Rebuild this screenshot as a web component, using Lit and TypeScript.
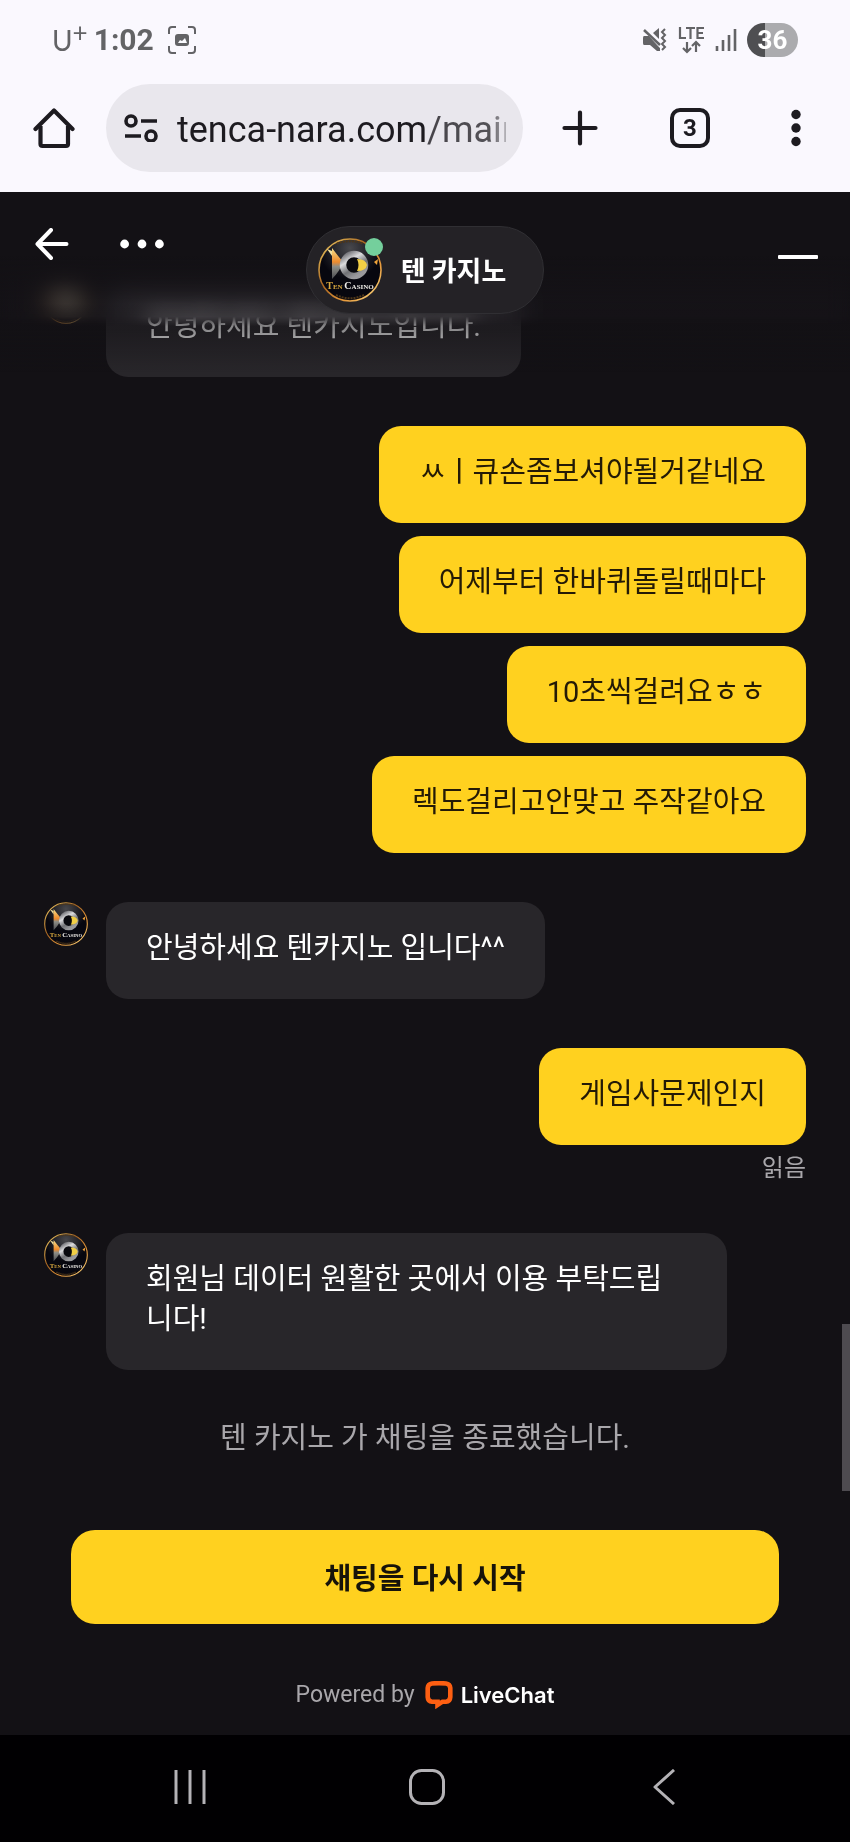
import { LitElement, html, css } from "lit";
import { customElement, property } from "lit/decorators.js";

interface Message {
  from: "agent" | "visitor";
  texts: string[];
  read?: boolean;
}

const MESSAGES: Message[] = [
  { from: "agent", texts: ["안녕하세요 텐카지노입니다."] },
  {
    from: "visitor",
    texts: [
      "ㅆㅣ큐손좀보셔야될거같네요",
      "어제부터 한바퀴돌릴때마다",
      "10초씩걸려요ㅎㅎ",
      "렉도걸리고안맞고 주작같아요",
    ],
  },
  { from: "agent", texts: ["안녕하세요 텐카지노 입니다^^"] },
  { from: "visitor", texts: ["게임사문제인지"], read: true },
  {
    from: "agent",
    texts: ["회원님 데이터 원활한 곳에서 이용 부탁드립니다!"],
  },
];

const buttonReset = css`
  button {
    display: grid;
    place-items: center;
    padding: 0;
    border: 0;
    background: none;
    color: inherit;
    font: inherit;
    cursor: pointer;
  }
  svg {
    display: block;
  }
`;

@customElement("agent-avatar")
export class AgentAvatar extends LitElement {
  static styles = css`
    :host {
      display: block;
      flex: none;
    }
    svg {
      display: block;
      width: 100%;
      height: 100%;
    }
    .name {
      font-family: "Liberation Serif", serif;
      font-weight: 700;
    }
  `;

  render() {
    return html`
      <svg viewBox="0 0 64 64" role="img" aria-label="Ten Casino">
        <defs>
          <linearGradient id="rim" x1="0" y1="0" x2="1" y2="1">
            <stop offset="0" stop-color="#f3d36a" />
            <stop offset="0.4" stop-color="#a8641f" />
            <stop offset="0.7" stop-color="#e79a3c" />
            <stop offset="1" stop-color="#f6dc8a" />
          </linearGradient>
          <linearGradient id="silver" x1="0" y1="0" x2="0.6" y2="1">
            <stop offset="0" stop-color="#66666b" />
            <stop offset="0.35" stop-color="#dcdcde" />
            <stop offset="0.7" stop-color="#707175" />
            <stop offset="1" stop-color="#9a9a9d" />
          </linearGradient>
          <linearGradient id="gold" x1="0" y1="0" x2="0" y2="1">
            <stop offset="0" stop-color="#f7e08a" />
            <stop offset="0.45" stop-color="#ee8a2c" />
            <stop offset="0.6" stop-color="#8d8d86" />
            <stop offset="1" stop-color="#4a4b50" />
          </linearGradient>
          <radialGradient id="glow" cx="0.5" cy="0.15" r="0.5">
            <stop offset="0" stop-color="#48484c" />
            <stop offset="1" stop-color="#07070f" />
          </radialGradient>
        </defs>
        <circle cx="32" cy="32" r="31" fill="url(#glow)" stroke="url(#rim)" stroke-width="1.6" />
        <path d="M19 5.500Q32 1 45 5.500M18 57Q32 63.500 46 57" fill="none" stroke="#4d3619" stroke-width="2" stroke-dasharray="2 1" />
        <path d="M9 11L14 13L14 18Z" fill="#f2e1a0" />
        <path d="M14 10Q20 18 25 24Q22 33 14 41Z" fill="url(#gold)" />
        <circle cx="36" cy="27" r="11" fill="#09090e" stroke="url(#silver)" stroke-width="6.500" />
        <path d="M39 21Q48 21 49 27Q48 33 39 33Q42 27 39 21Z" fill="#f2cf45" />
        <path d="M56 24L60 21L59 27Z" fill="#f0a43a" />
        <text class="name" x="32" y="51" font-size="10" text-anchor="middle" fill="#f0eeea"><tspan fill="#d9a93f">T</tspan><tspan fill="#d9a93f" font-size="7">EN </tspan>C<tspan font-size="7">ASINO</tspan></text>
      </svg>
    `;
  }
}

@customElement("phone-status-bar")
export class PhoneStatusBar extends LitElement {
  static styles = css`
    :host {
      display: flex;
      align-items: center;
      justify-content: space-between;
      height: 68px;
      padding: 12px 52px 0;
      box-sizing: border-box;
      color: #636366;
      font-family: Roboto, sans-serif;
    }
    svg {
      display: block;
    }
    .side {
      display: flex;
      align-items: center;
      gap: 10px;
    }
    .carrier {
      display: flex;
      align-items: flex-start;
      font-family: Lato, sans-serif;
      font-size: 28px;
      line-height: 32px;
    }
    .carrier sup {
      font-size: 26px;
      line-height: 16px;
    }
    .time {
      font-size: 30px;
      font-weight: 700;
      line-height: 32px;
      margin: 0 4px 0 -4px;
    }
    .battery {
      display: grid;
      place-items: center;
      width: 51px;
      height: 34px;
      border-radius: 17px;
      background: linear-gradient(90deg, #4f4f52 36%, #ababae 36%);
      color: #fff;
      font-size: 26px;
      font-weight: 700;
      line-height: 34px;
    }
  `;

  render() {
    return html`
      <div class="side">
        <span class="carrier">U<sup>+</sup></span>
        <time class="time">1:02</time>
        <svg width="28" height="28" viewBox="0 0 28 28" fill="none" stroke="currentColor" stroke-width="2">
          <path d="M1 8V4Q1 1 4 1H8M20 1H24Q27 1 27 4V8M27 20V24Q27 27 24 27H20M8 27H4Q1 27 1 24V20" />
          <rect x="7" y="8" width="14" height="12" rx="3" fill="currentColor" stroke="none" />
          <path d="M10 17L12 14L14 15L17 12L19 17Z" fill="#fafafe" stroke="none" />
        </svg>
      </div>
      <div class="side">
        <svg width="26" height="26" viewBox="0 0 26 26" fill="currentColor">
          <path d="M2 9H7L18 20V24H15L8 18H2Q1 18 1 16V11Q1 9 2 9Z" />
          <path d="M11 6L17 1V12Z" />
          <path d="M2 2L22 24" stroke="#fafafe" stroke-width="2" />
          <path d="M2 3L18 18" stroke="currentColor" stroke-width="2.500" />
          <path d="M23 2L20 5L23 8L20 11L23 14L20 17L23 20L20 23" fill="none" stroke="currentColor" stroke-width="2" />
        </svg>
        <svg width="27" height="28" viewBox="0 0 27 28" fill="none" stroke="currentColor" stroke-width="2.200">
          <path d="M2 1V12H8M8 2H17M12.500 2V13M26 2H19.500V12H26M19.500 7H25" />
          <path d="M9 16V26M5 22L9 26L13 22M18 26V16M14 20L18 16L22 20" />
        </svg>
        <svg width="22" height="24" viewBox="0 0 22 24" stroke="currentColor" stroke-width="2.600">
          <path d="M2 18V23M8 12V23M14 7V23M20 1V23" />
        </svg>
        <span class="battery">36</span>
      </div>
    `;
  }
}

@customElement("browser-toolbar")
export class BrowserToolbar extends LitElement {
  static styles = [
    buttonReset,
    css`
      :host {
        display: flex;
        align-items: center;
        padding: 16px 30px 20px 30px;
        color: #1d1b20;
      }
      .icon {
        width: 48px;
        height: 48px;
      }
      .address {
        display: flex;
        flex: 1;
        align-items: center;
        gap: 19px;
        min-width: 0;
        height: 88px;
        margin: 0 33px 0 28px;
        padding: 0 17px 0 18px;
        box-sizing: border-box;
        border-radius: 44px;
        background: #e9e7ed;
      }
      .url {
        flex: 1;
        min-width: 0;
        padding: 3px 0 0;
        border: 0;
        outline: 0;
        background: none;
        color: inherit;
        font: 36px/44px Roboto, sans-serif;
        -webkit-mask-image: linear-gradient(90deg, #000 76%, #000c 76%, #000b 95%, #0004);
        mask-image: linear-gradient(90deg, #000 76%, #000c 76%, #000b 95%, #0004);
      }
      .actions {
        display: flex;
        gap: 60px;
      }
      .tabs {
        width: 40px;
        height: 40px;
        margin: 4px 2px 4px 6px;
        border: 4px solid currentColor;
        border-radius: 10px;
        box-sizing: border-box;
        font: 700 24px/32px Roboto, sans-serif;
      }
    `,
  ];

  render() {
    return html`
      <button class="icon" aria-label="Home">
        <svg width="42" height="42" viewBox="0 0 42 42" fill="none" stroke="currentColor" stroke-width="4.200" stroke-linejoin="round">
          <path d="M7.500 19V37Q7.500 39 9.500 39H33Q35 39 35 37V19" />
          <path d="M2.500 22L21 3.500L39.500 22" stroke-linecap="round" />
        </svg>
      </button>
      <div class="address">
        <svg width="34" height="28" viewBox="0 0 34 28" fill="none" stroke="currentColor" stroke-width="3.600">
          <circle cx="7" cy="7" r="5" />
          <path d="M17 7H33M1 22H17" />
          <circle cx="27" cy="22" r="5" />
        </svg>
        <input class="url" type="text" aria-label="Address" .value=${"tenca-nara.com/main"} />
      </div>
      <div class="actions">
        <button class="icon" aria-label="New tab">
          <svg width="36" height="36" viewBox="0 0 36 36" stroke="currentColor" stroke-width="4.200" stroke-linecap="round">
            <path d="M18 2.500V33.500M2.500 18H33.500" />
          </svg>
        </button>
        <button class="tabs" aria-label="3 open tabs">3</button>
        <button class="icon" aria-label="Menu">
          <svg width="10" height="38" viewBox="0 0 10 38" fill="currentColor">
            <circle cx="5" cy="5.500" r="4.700" />
            <circle cx="5" cy="19" r="4.700" />
            <circle cx="5" cy="32.500" r="4.700" />
          </svg>
        </button>
      </div>
    `;
  }
}

@customElement("chat-header")
export class ChatHeader extends LitElement {
  static styles = [
    buttonReset,
    css`
      :host {
        display: grid;
        grid-template-columns: 1fr auto 1fr;
        align-items: start;
        height: 180px;
        padding: 34px 30px 0;
        box-sizing: border-box;
        color: #fff;
      }
      .frost,
      .shade {
        position: absolute;
        inset: 0 0 auto;
        z-index: -1;
      }
      .frost {
        height: 160px;
        backdrop-filter: blur(12px) brightness(1.2);
        -webkit-mask-image: linear-gradient(#000 78%, transparent 84%);
        mask-image: linear-gradient(#000 78%, transparent 84%);
      }
      .shade {
        height: 180px;
        background: linear-gradient(#131115 35%, #131115d0 48%, #13111570 62%, #13111580 76%, #13111500);
      }
      .left {
        display: flex;
        gap: 46px;
      }
      .icon {
        width: 44px;
        height: 36px;
      }
      .right {
        display: flex;
        justify-content: flex-end;
        padding-top: 13px;
      }
      .agent {
        display: flex;
        align-items: center;
        gap: 19px;
        height: 88px;
        padding: 0 37px 0 11px;
        box-sizing: border-box;
        border: 1px solid #302f33;
        border-radius: 44px;
        background: #242226;
      }
      .portrait {
        position: relative;
      }
      .avatar {
        width: 64px;
        height: 64px;
      }
      .online {
        position: absolute;
        top: 0;
        right: -1px;
        width: 18px;
        height: 18px;
        border-radius: 50%;
        background: #74cf9c;
      }
      .name {
        margin: 0;
        font-family: "Noto Sans CJK KR", sans-serif;
        font-size: 27px;
        font-weight: 700;
        line-height: 40px;
      }
    `,
  ];

  render() {
    return html`
      <div class="frost"></div>
      <div class="shade"></div>
      <div class="left">
        <button class="icon" aria-label="뒤로">
          <svg width="34" height="32" viewBox="0 0 34 32" fill="none" stroke="currentColor" stroke-width="4" stroke-linecap="round" stroke-linejoin="round">
            <path d="M16 2L2.500 16L16 30M2.500 16H31.500" />
          </svg>
        </button>
        <button class="icon" aria-label="메뉴">
          <svg width="44" height="10" viewBox="0 0 44 10" fill="currentColor">
            <circle cx="4.600" cy="5" r="4.400" />
            <circle cx="22" cy="5" r="4.400" />
            <circle cx="39.400" cy="5" r="4.400" />
          </svg>
        </button>
      </div>
      <div class="agent">
        <div class="portrait">
          <agent-avatar class="avatar"></agent-avatar>
          <span class="online"></span>
        </div>
        <h1 class="name">텐 카지노</h1>
      </div>
      <div class="right">
        <button class="icon" aria-label="최소화">
          <svg width="40" height="4" viewBox="0 0 40 4"><rect width="40" height="4" rx="1" fill="currentColor" /></svg>
        </button>
      </div>
    `;
  }
}

@customElement("chat-message")
export class ChatMessage extends LitElement {
  @property({ attribute: false }) message!: Message;

  static styles = css`
    :host {
      display: block;
    }
    .group {
      display: flex;
      gap: 18px;
    }
    .agent {
      padding-right: 79px;
    }
    .visitor {
      justify-content: flex-end;
    }
    .avatar {
      width: 44px;
      height: 44px;
    }
    .stack {
      display: flex;
      flex-direction: column;
      gap: 13px;
      min-width: 0;
    }
    .visitor .stack {
      align-items: flex-end;
    }
    .bubble {
      margin: 0;
      padding: 26px 40px 31px;
      border-radius: 22px;
      font-size: 29px;
      line-height: 40px;
    }
    .agent .bubble {
      background: #28262a;
      color: #fff;
    }
    .visitor .bubble {
      background: #ffd11f;
      color: #241a06;
    }
    .read {
      margin-top: -4px;
      padding-bottom: 2px;
      color: #a9a7ab;
      font-size: 24px;
      line-height: 28px;
    }
  `;

  render() {
    const { from, texts, read } = this.message;
    return html`
      <div class="group ${from}">
        ${from === "agent" ? html`<agent-avatar class="avatar"></agent-avatar>` : null}
        <div class="stack">
          ${texts.map((text) => html`<p class="bubble">${text}</p>`)}
          ${read ? html`<span class="read">읽음</span>` : null}
        </div>
      </div>
    `;
  }
}

@customElement("app-root")
export class AppRoot extends LitElement {
  static styles = [
    buttonReset,
    css`
      :host {
        display: flex;
        flex-direction: column;
        min-height: 100vh;
        background: #faf8fe;
        font-family: Roboto, "Noto Sans CJK KR", sans-serif;
      }
      .chat {
        position: relative;
        display: flex;
        flex: 1;
        flex-direction: column;
        background: #131115;
      }
      .header {
        position: absolute;
        inset: 0 0 auto;
        z-index: 1;
      }
      .messages {
        display: flex;
        flex-direction: column;
        gap: 49px;
        padding: 88px 44px 0;
      }
      .ended {
        margin: 0;
        padding: 48px 44px 0;
        color: #a9a7ab;
        font-size: 29px;
        line-height: 40px;
        text-align: center;
      }
      .restart {
        height: 94px;
        margin: 72px 71px 0;
        padding-top: 4px;
        border-radius: 24px;
        background: #ffd11f;
        color: #17130a;
        font-size: 29px;
        font-weight: 700;
        line-height: 40px;
      }
      .powered {
        display: flex;
        align-items: center;
        justify-content: center;
        gap: 10px;
        padding: 55px 0 24px;
        color: #a9a7ab;
        font-size: 23px;
        line-height: 32px;
      }
      .brand {
        display: flex;
        align-items: center;
        gap: 8px;
        color: #fff;
        font-family: Inter, sans-serif;
        font-size: 22px;
        font-weight: 600;
        text-decoration: none;
      }
      .scrollbar {
        position: absolute;
        right: 0;
        bottom: 244px;
        width: 8px;
        height: 167px;
        background: #4e4b50;
      }
      .nav {
        display: grid;
        grid-template-columns: repeat(3, 1fr);
        height: 107px;
        padding: 0 67px 4px 71px;
        box-sizing: border-box;
        background: #010002;
        color: #b4b2b6;
      }
    `,
  ];

  render() {
    return html`
      <phone-status-bar></phone-status-bar>
      <browser-toolbar></browser-toolbar>
      <main class="chat">
        <chat-header class="header"></chat-header>
        <section class="messages">
          ${MESSAGES.map((m) => html`<chat-message .message=${m}></chat-message>`)}
        </section>
        <p class="ended">텐 카지노 가 채팅을 종료했습니다.</p>
        <button class="restart">채팅을 다시 시작</button>
        <footer class="powered">
          Powered by
          <a class="brand" href="#livechat">
            <svg width="28" height="28" viewBox="0 0 28 28" fill="none">
              <path d="M7 2.500Q14 1.800 21 2.500Q25 3 25.300 7V16Q25 20.500 21 20.700H17.500L12.500 24V20.700H7Q3 20.500 2.700 16V7Q3 3 7 2.500Z" stroke="#fd5f12" stroke-width="4.600" />
            </svg>
            LiveChat
          </a>
        </footer>
        <div class="scrollbar"></div>
      </main>
      <nav class="nav">
        <button aria-label="Recents">
          <svg width="34" height="34" viewBox="0 0 34 34" stroke="currentColor" stroke-width="3">
            <path d="M3 0V34M17 0V34M31 0V34" />
          </svg>
        </button>
        <button aria-label="Home">
          <svg width="36" height="36" viewBox="0 0 36 36" fill="none" stroke="currentColor" stroke-width="3">
            <rect x="1.500" y="1.500" width="33" height="33" rx="11" />
          </svg>
        </button>
        <button aria-label="Back">
          <svg width="24" height="36" viewBox="0 0 24 36" fill="none" stroke="currentColor" stroke-width="3" stroke-linejoin="round">
            <path d="M22 1L3 18L22 35" />
          </svg>
        </button>
      </nav>
    `;
  }
}
